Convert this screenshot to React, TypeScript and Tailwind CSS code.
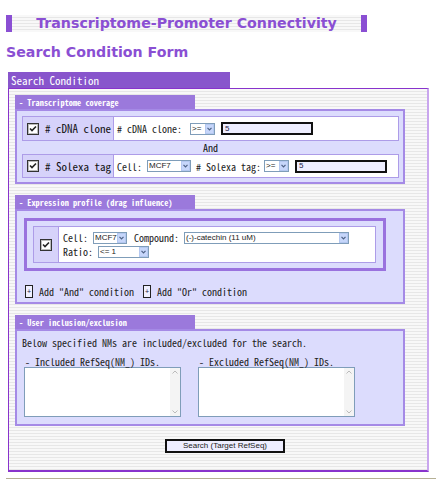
import React from "react";

const jp = "font-['Noto_Sans_Mono_CJK_JP','Noto_Sans_Mono','DejaVu_Sans_Mono',monospace]";
const stripes =
  "bg-[repeating-linear-gradient(to_bottom,#f8f8f8_0px,#f8f8f8_2px,#e7e7e7_2px,#e7e7e7_3px)]";

const Check = () => (
  <svg width="12" height="12" viewBox="0 0 12 12" className="shrink-0">
    <rect x="0.5" y="0.5" width="11" height="11" fill="#fff" stroke="#333" />
    <rect x="1.5" y="1.5" width="9" height="9" fill="none" stroke="#bbb" />
    <path d="M3 5.5 L5 7.5 L9 3.5" fill="none" stroke="#222" strokeWidth="1.6" />
  </svg>
);

const Select = ({ value, w }: { value: string; w: number }) => (
  <div
    className="flex items-center shrink-0 h-[12px] border border-[#7f9db9] bg-white font-['Liberation_Sans',sans-serif] text-[8px] leading-none text-[#222]"
    style={{ width: w }}
  >
    <span className="flex-1 pl-[1px] overflow-hidden whitespace-nowrap">{value}</span>
    <span className="w-[9px] h-[10px] bg-[#c6d6fa] border border-[#b4c8f0] flex items-center justify-center">
      <svg width="5" height="4" viewBox="0 0 5 4">
        <path d="M0.5 0.8 L2.5 2.8 L4.5 0.8" fill="none" stroke="#4d6185" strokeWidth="1.2" />
      </svg>
    </span>
  </div>
);

const TextInput = ({ w }: { w: number }) => (
  <div
    className="h-[13px] border-2 border-[#111] bg-[#eeeeff] flex items-center pl-[2px] font-['Liberation_Sans',sans-serif] text-[8px] leading-none text-[#224]"
    style={{ width: w }}
  >
    5
  </div>
);

const SectionTab = ({ label }: { label: string }) => (
  <div
    className={`w-[180px] h-[14px] bg-[#9b79dc] text-white text-[8.3px] font-bold leading-[14px] pl-[4px] whitespace-nowrap ${jp}`}
  >
    {label}
  </div>
);

const TextArea = () => (
  <div className="w-[157px] h-[50px] border border-[#7f9db9] bg-white flex justify-end">
    <div className="w-[10px] h-full bg-[#f4f4f4] flex flex-col justify-between items-center py-[2px]">
      <svg width="6" height="4" viewBox="0 0 6 4">
        <path d="M0.5 3.5 L3 1 L5.5 3.5" fill="none" stroke="#bbb" strokeWidth="1" />
      </svg>
      <svg width="6" height="4" viewBox="0 0 6 4">
        <path d="M0.5 0.5 L3 3 L5.5 0.5" fill="none" stroke="#bbb" strokeWidth="1" />
      </svg>
    </div>
  </div>
);

const PlusIcon = () => (
  <span className="w-[8px] h-[13px] border border-[#222] bg-[#f0f0ff] flex items-center justify-center text-[7px] leading-none text-[#224] font-['Liberation_Sans',sans-serif]">
    +
  </span>
);

export default function App() {
  return (
    <div className={`w-[441px] h-[495px] bg-white overflow-hidden whitespace-nowrap ${jp}`}>
      {/* page title */}
      <div className={`mt-[15px] ml-[6px] w-[361px] h-[17px] flex items-center ${stripes}`}>
        <div className="w-[6px] h-full bg-[#8a4fd3]" />
        <div className="flex-1 text-center font-['DejaVu_Sans',sans-serif] font-bold text-[14.2px] leading-none text-[#8a4fd3]">
          Transcriptome-Promoter Connectivity
        </div>
        <div className="w-[6px] h-full bg-[#8a4fd3]" />
      </div>

      <h1 className="mt-[11px] ml-[6px] h-[19px] font-['DejaVu_Sans',sans-serif] font-bold text-[14.2px] leading-[19px] text-[#8a4fd3]">
        Search Condition Form
      </h1>

      {/* Search Condition tab */}
      <div className="mt-[10px] ml-[8px] w-[222px] h-[16px] bg-[#8855cc] text-white text-[11px] leading-[16px] pl-[3px]">
        Search Condition
      </div>

      {/* outer box */}
      <div
        className={`ml-[8px] w-[421px] h-[384px] border-l border-t border-[#8833cc] border-b-2 border-r-2 border-r-[#c9a6ee] border-b-[#8833cc] pl-[6px] pt-[6px] ${stripes}`}
      >
        {/* Section 1 */}
        <SectionTab label="- Transcriptome coverage" />
        <div className="w-[390px] h-[75px] bg-[#dcdcfd] border-2 border-[#a58ae6] pt-[5px] pl-[5px] pr-[4px]">
          <div className="flex h-[25px] border border-[#ad9ce8]">
            <div className="w-[91px] bg-[#d6d2fa] border-r border-[#ad9ce8] flex items-center gap-[6px] pl-[4px] text-[11px] text-[#111]">
              <Check />
              <span># cDNA clone</span>
            </div>
            <div className="flex-1 bg-white flex items-center pl-[3px] text-[10px] text-[#222]">
              <span className="w-[73px]"># cDNA clone:</span>
              <Select value=">=" w={25} />
              <span className="ml-[6px]">
                <TextInput w={92} />
              </span>
            </div>
          </div>
          <div className="h-[13px] text-center text-[10px] leading-[13px] text-[#111]">And</div>
          <div className="flex h-[24px] border border-[#ad9ce8]">
            <div className="w-[91px] bg-[#d6d2fa] border-r border-[#ad9ce8] flex items-center gap-[6px] pl-[4px] text-[11px] text-[#111]">
              <Check />
              <span># Solexa tag</span>
            </div>
            <div className="flex-1 bg-white flex items-center pl-[3px] text-[10px] text-[#222]">
              <span className="w-[30px]">Cell:</span>
              <Select value="MCF7" w={44} />
              <span className="ml-[5px] w-[68px]"># Solexa tag:</span>
              <Select value=">=" w={25} />
              <span className="ml-[6px]">
                <TextInput w={92} />
              </span>
            </div>
          </div>
        </div>

        {/* Section 2 */}
        <div className="mt-[11px]">
          <SectionTab label="- Expression profile (drag influence)" />
        </div>
        <div className="w-[390px] h-[95px] bg-[#dcdcfd] border-2 border-[#a58ae6] pt-[7px] pl-[7px]">
          <div className="w-[362px] h-[53px] border-[3px] border-[#9a72de] p-[5px] pl-[6px] pr-[7px]">
            <div className="flex h-[37px] border border-[#ad9ce8]">
              <div className="w-[25px] bg-[#d6d2fa] border-r border-[#ad9ce8] flex items-center justify-center">
                <Check />
              </div>
              <div className="flex-1 bg-white pl-[4px] pt-[4px] text-[10px] text-[#222] leading-none">
                <div className="flex items-center h-[13px]">
                  <span className="w-[30px]">Cell:</span>
                  <Select value="MCF7" w={34} />
                  <span className="ml-[7px] w-[50px]">Compound:</span>
                  <Select value="(-)-catechin (11 uM)" w={165} />
                </div>
                <div className="flex items-center h-[13px] mt-[1px]">
                  <span className="w-[35px]">Ratio:</span>
                  <Select value="<= 1" w={51} />
                </div>
              </div>
            </div>
          </div>
          <div className="flex items-center mt-[13px] ml-[1px] text-[10px] text-[#222]">
            <PlusIcon />
            <span className="ml-[6px]">Add "And" condition</span>
            <span className="ml-[9px]">
              <PlusIcon />
            </span>
            <span className="ml-[6px]">Add "Or" condition</span>
          </div>
        </div>

        {/* Section 3 */}
        <div className="mt-[11px]">
          <SectionTab label="- User inclusion/exclusion" />
        </div>
        <div className="w-[390px] h-[97px] bg-[#dcdcfd] border-2 border-[#a58ae6] pt-[5px] pl-[5px] text-[10px] text-[#222]">
          <div className="h-[14px] leading-[14px]">
            Below specified NMs are included/excluded for the search.
          </div>
          <div className="flex gap-[17px] mt-[6px] pl-[2px]">
            <div>
              <div className="h-[11px] leading-[11px] pl-[1px]">- Included RefSeq(NM_) IDs.</div>
              <TextArea />
            </div>
            <div>
              <div className="h-[11px] leading-[11px] pl-[1px]">- Excluded RefSeq(NM_) IDs.</div>
              <TextArea />
            </div>
          </div>
        </div>

        <div className="mt-[13px] ml-[150px] w-[120px] h-[14px] border-2 border-[#111] bg-[#eeeeff] flex items-center justify-center font-['Liberation_Sans',sans-serif] text-[8px] leading-none text-[#222]">
          Search (Target RefSeq)
        </div>
      </div>

      <div className="mt-[6px] ml-[6px] w-[430px] h-[1px] bg-[#b5b095]" />
    </div>
  );
}
